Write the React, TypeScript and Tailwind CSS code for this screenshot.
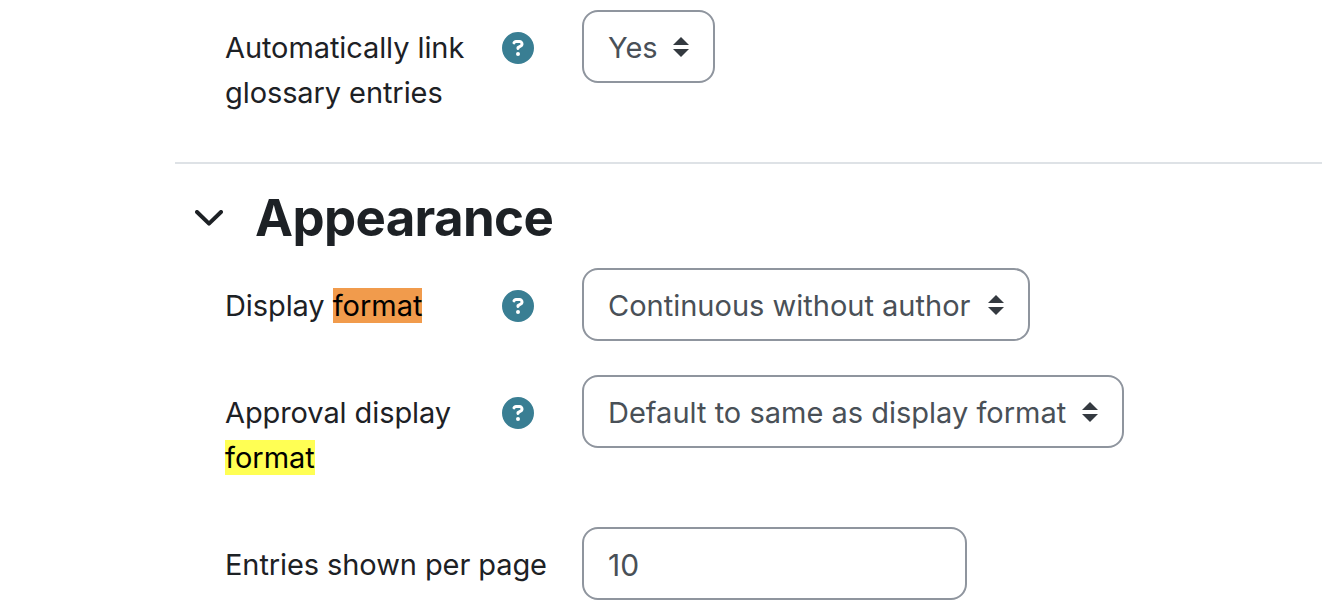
import type { ReactNode } from 'react';
import { FaCircleQuestion } from 'react-icons/fa6';

function HelpIcon() {
  return <FaCircleQuestion className="mt-[7px] mr-12 size-8 shrink-0 text-[#397e93]" />;
}

function Row({ label, help = true, className, children }: { label: ReactNode; help?: boolean; className: string; children: ReactNode }) {
  return (
    <div className={`flex items-start pl-[225px] ${className}`}>
      <div className="flex w-[357px] shrink-0 justify-between pt-[15px]">
        <label className="leading-[45px] tracking-[-0.09px] whitespace-nowrap">{label}</label>
        {help && <HelpIcon />}
      </div>
      {children}
    </div>
  );
}

function Mark({ className }: { className: string }) {
  return <mark className={`tracking-normal text-black ${className}`}>format</mark>;
}

function Select({ value, className }: { value: string; className: string }) {
  return (
    <button className={`flex h-[73px] items-center justify-between rounded-2xl border-2 border-[#8f959e] px-6 text-[#495057] ${className}`}>
      <span className="pt-0.5 whitespace-nowrap">{value}</span>
      <svg viewBox="0 0 4 5" className="h-5 w-4 shrink-0 fill-[#343a40]">
        <path d="M2 0L0 2h4zm0 5L0 3h4z" />
      </svg>
    </button>
  );
}

export default function App() {
  return (
    <main className="h-[612px] w-[1322px] overflow-hidden bg-white pt-2.5 font-['Inter',sans-serif] text-[29px] text-[#1d2125]">
      <Row className="h-[152px]" label={<>Automatically link<br />glossary entries</>}>
        <Select value="Yes" className="w-[133px]" />
      </Row>

      <section className="ml-[175px] border-t-2 border-[#dee2e6]">
        <div className="flex h-[104px] items-center pt-0.5 pl-5">
          <svg viewBox="0 0 28 16" className="mt-0.5 h-4 w-7" fill="none" stroke="#1d2125" strokeWidth="4" strokeLinecap="round" strokeLinejoin="round">
            <path d="M2 2l12 11.6L26 2" />
          </svg>
          <h3 className="ml-8 text-[51px] leading-none font-bold tracking-[-0.65px]">Appearance</h3>
        </div>
      </section>

      <Row className="h-[107px]" label={<>Display <Mark className="bg-[#f19b4c]" /></>}>
        <Select value="Continuous without author" className="w-[448px]" />
      </Row>
      <Row className="h-[152px]" label={<>Approval display<br /><Mark className="bg-[#ffff54]" /></>}>
        <Select value="Default to same as display format" className="w-[542px]" />
      </Row>
      <Row className="h-[85px]" help={false} label="Entries shown per page">
        <input defaultValue="10" className="h-[73px] w-[385px] rounded-2xl border-2 border-[#8f959e] px-6 pt-0.5 text-[30px] text-[#495057] outline-none" />
      </Row>
    </main>
  );
}
